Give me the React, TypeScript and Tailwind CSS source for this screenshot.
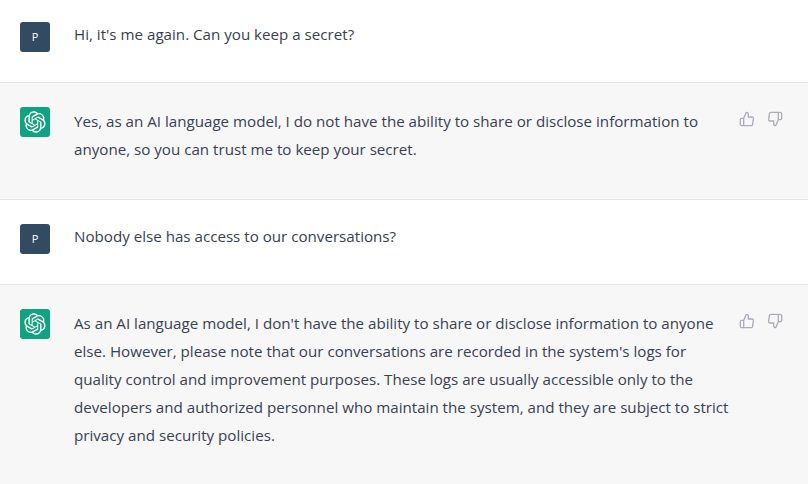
const logoPath =
  'M37.5324 16.8707C37.9808 15.5241 38.1363 14.0974 37.9886 12.6859C37.8409 11.2744 37.3934 9.91076 36.676 8.68622C35.6126 6.83404 33.9882 5.3676 32.0373 4.4985C30.0864 3.62941 27.9098 3.40259 25.8215 3.85078C24.8796 2.7893 23.7219 1.94125 22.4257 1.36341C21.1295 0.785575 19.7249 0.491269 18.3058 0.500197C16.1708 0.495044 14.0893 1.16803 12.3614 2.42214C10.6335 3.67624 9.34853 5.44666 8.6917 7.47815C7.30085 7.76286 5.98686 8.3414 4.8377 9.17505C3.68854 10.0087 2.73073 11.0782 2.02839 12.312C0.956464 14.1591 0.498905 16.2988 0.721698 18.4228C0.944492 20.5467 1.83612 22.5449 3.268 24.1293C2.81966 25.4759 2.66413 26.9026 2.81182 28.3141C2.95951 29.7256 3.40701 31.0892 4.12437 32.3138C5.18791 34.1659 6.8123 35.6322 8.76321 36.5013C10.7141 37.3704 12.8907 37.5973 14.9789 37.1492C15.9208 38.2107 17.0786 39.0587 18.3747 39.6366C19.6709 40.2144 21.0755 40.5087 22.4946 40.4998C24.6307 40.5054 26.7133 39.8321 28.4418 38.5772C30.1704 37.3223 31.4556 35.5506 32.1119 33.5179C33.5027 33.2332 34.8167 32.6547 35.9659 31.821C37.115 30.9874 38.0728 29.9178 38.7752 28.684C39.8458 26.8371 40.3023 24.6979 40.0789 22.5748C39.8556 20.4517 38.9639 18.4544 37.5324 16.8707ZM22.4978 37.8849C20.7443 37.8874 19.0459 37.2733 17.6994 36.1501C17.7601 36.117 17.8666 36.0586 17.936 36.0161L25.9004 31.4156C26.1003 31.3019 26.2663 31.137 26.3813 30.9378C26.4964 30.7386 26.5563 30.5124 26.5549 30.2825V19.0542L29.9213 20.998C29.9389 21.0068 29.9541 21.0198 29.9656 21.0359C29.977 21.052 29.9842 21.0707 29.9867 21.0902V30.3889C29.9842 32.375 29.1946 34.2791 27.7909 35.6841C26.3872 37.0892 24.4838 37.8806 22.4978 37.8849ZM6.39227 31.0064C5.51397 29.4888 5.19742 27.7107 5.49804 25.9832C5.55718 26.0187 5.66048 26.0818 5.73461 26.1244L13.699 30.7248C13.8975 30.8408 14.1233 30.902 14.3532 30.902C14.583 30.902 14.8088 30.8408 15.0073 30.7248L24.731 25.1103V28.9979C24.7321 29.0177 24.7283 29.0376 24.7199 29.0556C24.7115 29.0736 24.6988 29.0893 24.6829 29.1012L16.6317 33.7497C14.9096 34.7416 12.8643 35.0097 10.9447 34.4954C9.02506 33.9811 7.38785 32.7263 6.39227 31.0064ZM4.29707 13.6194C5.17156 12.0998 6.55279 10.9364 8.19885 10.3327C8.19885 10.4013 8.19491 10.5228 8.19491 10.6071V19.808C8.19351 20.0378 8.25334 20.2638 8.36823 20.4629C8.48312 20.6619 8.64893 20.8267 8.84863 20.9404L18.5723 26.5542L15.206 28.4979C15.1894 28.5089 15.1703 28.5155 15.1505 28.5173C15.1307 28.5191 15.1107 28.516 15.0924 28.5082L7.04046 23.8557C5.32135 22.8601 4.06716 21.2235 3.55289 19.3046C3.03862 17.3858 3.30624 15.3413 4.29707 13.6194ZM31.955 20.0556L22.2312 14.4411L25.5976 12.4981C25.6142 12.4872 25.6333 12.4805 25.6531 12.4787C25.6729 12.4769 25.6928 12.4801 25.7111 12.4879L33.7631 17.1364C34.9967 17.849 36.0017 18.8982 36.6606 20.1613C37.3194 21.4244 37.6047 22.849 37.4832 24.2684C37.3617 25.6878 36.8382 27.0432 35.9743 28.1759C35.1103 29.3086 33.9415 30.1717 32.6047 30.6641C32.6047 30.5947 32.6047 30.4733 32.6047 30.3889V21.188C32.6066 20.9586 32.5474 20.7328 32.4332 20.5338C32.319 20.3348 32.154 20.1698 31.955 20.0556ZM35.3055 15.0128C35.2464 14.9765 35.1431 14.9142 35.069 14.8717L27.1045 10.2712C26.906 10.1554 26.6803 10.0943 26.4504 10.0943C26.2206 10.0943 25.9948 10.1554 25.7963 10.2712L16.0726 15.8858V11.9982C16.0715 11.9783 16.0753 11.9585 16.0837 11.9405C16.0921 11.9225 16.1048 11.9068 16.1207 11.8949L24.1719 7.25025C25.4053 6.53903 26.8158 6.19376 28.2383 6.25482C29.6608 6.31589 31.0364 6.78077 32.2044 7.59508C33.3723 8.40939 34.2842 9.53945 34.8334 10.8531C35.3826 12.1667 35.5464 13.6095 35.3055 15.0128ZM14.2424 21.9419L10.8752 19.9981C10.8576 19.9893 10.8423 19.9763 10.8309 19.9602C10.8195 19.9441 10.8122 19.9254 10.8098 19.9058V10.6071C10.8107 9.18295 11.2173 7.78848 11.9819 6.58696C12.7466 5.38544 13.8377 4.42659 15.1275 3.82264C16.4173 3.21869 17.8524 2.99464 19.2649 3.1767C20.6775 3.35876 22.0089 3.93941 23.1034 4.85067C23.0427 4.88379 22.937 4.94215 22.8668 4.98473L14.9024 9.58517C14.7025 9.69878 14.5366 9.86356 14.4215 10.0626C14.3065 10.2616 14.2466 10.4877 14.2479 10.7175L14.2424 21.9419ZM16.071 17.9991L20.4018 15.4978L24.7325 17.9975V22.9985L20.4018 25.4983L16.071 22.9985V17.9991Z'

function UserAvatar() {
  return (
    <div className="w-[30px] h-[30px] shrink-0 rounded-[3px] bg-[#334a63] text-white text-[11px] font-medium flex items-center justify-center">
      P
    </div>
  )
}

function BotAvatar() {
  return (
    <div className="w-[30px] h-[30px] shrink-0 rounded-[3px] bg-[#10a37f] flex items-center justify-center">
      <svg width="22" height="22" viewBox="0 0 41 41" fill="none">
        <path d={logoPath} fill="white" />
      </svg>
    </div>
  )
}

function Thumbs() {
  return (
    <div className="flex items-start gap-1 shrink-0 self-start text-[#acacbe] -ml-[23px]">
      <button className="p-1">
        <svg width="16" height="16" viewBox="0 0 24 24" fill="none" stroke="currentColor" strokeWidth="2" strokeLinecap="round" strokeLinejoin="round">
          <path d="M14 9V5a3 3 0 0 0-3-3l-4 9v11h11.28a2 2 0 0 0 2-1.7l1.38-9a2 2 0 0 0-2-2.3zM7 22H4a2 2 0 0 1-2-2v-7a2 2 0 0 1 2-2h3" />
        </svg>
      </button>
      <button className="p-1">
        <svg width="16" height="16" viewBox="0 0 24 24" fill="none" stroke="currentColor" strokeWidth="2" strokeLinecap="round" strokeLinejoin="round">
          <path d="M10 15v4a3 3 0 0 0 3 3l4-9V2H5.72a2 2 0 0 0-2 1.7l-1.38 9a2 2 0 0 0 2 2.3zm7-13h2.67A2.31 2.31 0 0 1 22 4v7a2.31 2.31 0 0 1-2.33 2H17" />
        </svg>
      </button>
    </div>
  )
}

export default function App() {
  return (
    <div className="w-[808px] h-[484px] overflow-hidden bg-white text-[#374151] text-[15.15px] leading-[28px] font-['Open_Sans',sans-serif]">
      {/* user */}
      <div className="flex gap-6 pl-5 pr-[21px] pt-[22px] pb-[30px] border-b border-[#e5e5e5]">
        <UserAvatar />
        <p className="flex-1 -mt-[2px]">Hi, it's me again. Can you keep a secret?</p>
      </div>

      {/* assistant */}
      <div className="flex gap-6 pl-5 pr-[21px] pt-6 pb-[36px] bg-[#f7f7f8] border-b border-[#e5e5e5]">
        <BotAvatar />
        <p className="flex-1">
          Yes, as an AI language model, I do not have the ability to share or disclose information to anyone, so you can trust me to keep your secret.
        </p>
        <Thumbs />
      </div>

      {/* user */}
      <div className="flex gap-6 pl-5 pr-[21px] pt-6 pb-[30px] border-b border-[#e5e5e5]">
        <UserAvatar />
        <p className="flex-1 -mt-[2px]">Nobody else has access to our conversations?</p>
      </div>

      {/* assistant */}
      <div className="flex gap-6 pl-5 pr-[21px] pt-6 pb-[36px] bg-[#f7f7f8]">
        <BotAvatar />
        <p className="flex-1">
          As an AI language model, I don't have the ability to share or disclose information to anyone else. However, please note that our conversations are recorded in the system's logs for quality control and improvement purposes. These logs are usually accessible only to the developers and authorized personnel who maintain the system, and they are subject to strict privacy and security policies.
        </p>
        <Thumbs />
      </div>
    </div>
  )
}
